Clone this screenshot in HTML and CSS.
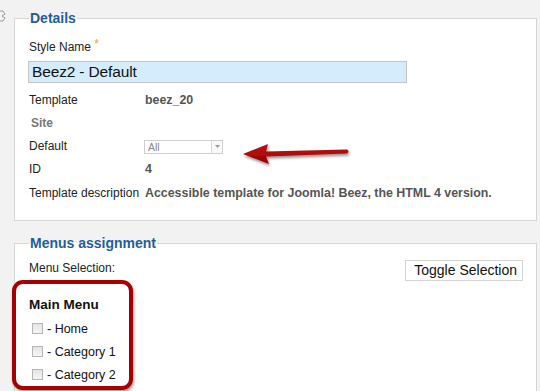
FILE: index.html
```html
<!DOCTYPE html>
<html>
<head>
<meta charset="utf-8">
<link rel="stylesheet" href="styles.css">
</head>
<body>
<svg class="corner-icon" width="8" height="14" viewBox="0 0 8 14"><path d="M-2 2 L3 2 L5 5 L2 7 L5 9 L3 12 L-2 12" fill="none" stroke="#9a9a9a" stroke-width="1"/></svg>
<fieldset class="panel details">
  <legend>Details</legend>
  <div class="field-label">Style Name <span class="star">*</span></div>
  <div class="name-input">Beez2 - Default</div>
  <div class="grid">
    <div class="lbl">Template</div><div class="val">beez_20</div>
    <div class="lbl site">Site</div><div></div>
    <div class="lbl">Default</div>
    <div class="sel-cell"><div class="select"><span class="sel-text">All</span><span class="sel-btn"><svg width="5" height="3" viewBox="0 0 5 3"><path d="M0 0 L5 0 L2.5 3 Z" fill="#999"/></svg></span></div></div>
    <div class="lbl">ID</div><div class="val">4</div>
    <div class="lbl">Template description</div><div class="val">Accessible template for Joomla! Beez, the HTML 4 version.</div>
  </div>
</fieldset>
<fieldset class="panel menus">
  <legend>Menus assignment</legend>
  <div class="sel-row">
    <span class="field-label">Menu Selection:</span>
    <span class="toggle">Toggle Selection</span>
  </div>
  <div class="menu-group">
    <div class="menu-title">Main Menu</div>
    <div class="item"><span class="cb"></span>- Home</div>
    <div class="item"><span class="cb"></span>- Category 1</div>
    <div class="item"><span class="cb"></span>- Category 2</div>
  </div>
</fieldset>
<svg class="arrow" width="124" height="34" viewBox="0 0 124 34">
  <defs>
    <filter id="sh" x="-20%" y="-50%" width="140%" height="200%">
      <feDropShadow dx="1" dy="2" stdDeviation="1.5" flood-color="#000" flood-opacity="0.45"/>
    </filter>
    <linearGradient id="g" x1="0" y1="0" x2="0" y2="1">
      <stop offset="0" stop-color="#c01010"/>
      <stop offset="1" stop-color="#9a0000"/>
    </linearGradient>
  </defs>
  <g filter="url(#sh)">
    <path d="M5 14 L30 4 L28 11.5 L109 9.5 Q112 11.5 109 13.5 L28 16.5 L31 24 Z" fill="url(#g)"/>
  </g>
</svg>
</body>
</html>
```
FILE: styles.css
```css
html, body {
  margin: 0;
  padding: 0;
}
body {
  background: #f2f2f2;
  font-family: "Liberation Sans", Arial, sans-serif;
  font-size: 12px;
  color: #222;
  width: 540px;
  height: 391px;
  overflow: hidden;
  position: relative;
}
.corner-icon {
  position: absolute;
  left: 0;
  top: 9px;
}
.panel {
  background: #fff;
  border: 1px solid #d6d6d6;
  margin: 10px 3px 0 14px;
  padding: 13px 13px 16px 14px;
  min-inline-size: 0;
}
.panel legend {
  font-size: 14px;
  font-weight: bold;
  line-height: 16px;
  color: #235e9c;
  padding: 0 1px;
  margin-left: 0;
}
.field-label {
  line-height: 16px;
  color: #222;
}
.star {
  color: #f0a040;
  font-size: 12px;
  line-height: 0;
  vertical-align: 3px;
}
.name-input {
  margin: 6px 0 0 -1px;
  width: 379px;
  height: 22px;
  box-sizing: border-box;
  border: 1px solid #c4c4c4;
  background: #d4ecfc;
  font-size: 15.5px;
  line-height: 20px;
  padding-left: 3px;
  color: #111;
  letter-spacing: -0.15px;
}
.grid {
  margin-top: 5px;
  display: grid;
  grid-template-columns: 116px auto;
  grid-auto-rows: 23.25px;
  align-items: center;
}
.lbl {
  color: #222;
}
.lbl.site {
  color: #777;
  font-weight: bold;
  padding-left: 2px;
}
.val {
  font-weight: bold;
  color: #555;
  font-size: 12.4px;
}
.sel-cell {
  display: flex;
  align-items: center;
}
.select {
  margin-left: -1px;
  width: 79px;
  height: 14px;
  box-sizing: border-box;
  border: 1px solid #cfcfcf;
  background: #fff;
  display: flex;
  align-items: center;
  justify-content: space-between;
  margin-top: 1px;
}
.sel-text {
  font-size: 10.5px;
  color: #888;
  padding-left: 3px;
  line-height: 12px;
}
.sel-btn {
  width: 11px;
  height: 12px;
  box-sizing: border-box;
  border-left: 1px solid #d8d8d8;
  display: flex;
  align-items: center;
  justify-content: center;
  background: #f8f8f8;
}
.menus {
  margin-top: 14px;
  padding-top: 9px;
  padding-bottom: 20px;
}
.sel-row {
  display: flex;
  justify-content: space-between;
  align-items: flex-start;
}
.toggle {
  margin-top: 0;
  height: 21px;
  box-sizing: border-box;
  border: 1px solid #d4d4d4;
  background: #fff;
  font-size: 14px;
  line-height: 19px;
  padding: 0 5px 0 8px;
  color: #111;
}
.menu-group {
  margin: -1px 0 0 -17px;
  width: 121px;
  box-sizing: border-box;
  border: 4px solid #a60000;
  border-radius: 11px;
  box-shadow: 1px 2px 3px rgba(0, 0, 0, 0.4);
  padding: 13px 0 0 13px;
  background: #fff;
}
.menu-title {
  font-size: 13.5px;
  font-weight: bold;
  line-height: 15px;
  color: #111;
  margin-bottom: 5px;
}
.item {
  height: 23px;
  display: flex;
  align-items: center;
  font-size: 12.5px;
  color: #111;
}
.cb {
  width: 9px;
  height: 9px;
  border: 1px solid #b5b5b5;
  background: linear-gradient(#e4e4e4, #f6f6f6);
  margin: 0 4px 0 3px;
}
.arrow {
  position: absolute;
  left: 238px;
  top: 140px;
}
```
